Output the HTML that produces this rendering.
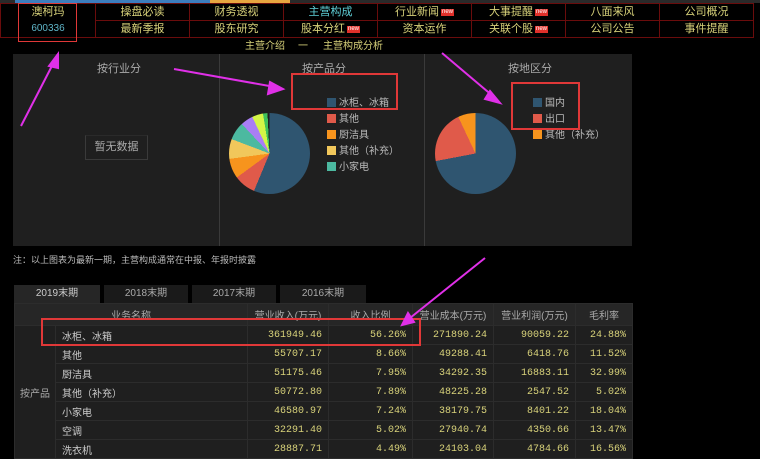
<!DOCTYPE html>
<html><head><meta charset="utf-8"><style>
*{margin:0;padding:0;box-sizing:border-box}
body{width:760px;height:448px;background:#000;position:relative;overflow:hidden;font-family:"Liberation Sans","Noto Sans CJK SC",sans-serif;font-size:11px;color:#ccc}
.a{position:absolute}
.nav{table-layout:fixed}
.nav td{border:1px solid #6a0c0c;color:#d8d27a;text-align:center;height:16px;font-size:11px;line-height:14px;padding:0;white-space:nowrap;overflow:hidden}
.new{display:inline-block;background:#e0302a;color:#fff;font-size:6px;line-height:7px;padding:0 1px;vertical-align:middle;margin-left:2px}
.panel{left:13px;top:54px;width:619px;height:192px;background:#1f1f1f}
.tt{color:#aaa;font-size:11px}
.lg{font-size:10px;color:#bbb;line-height:16px}
.lg i{display:inline-block;width:9px;height:9px;vertical-align:-1px;margin-right:3px}
.tab{top:285px;height:18px;background:#1a1a1a;color:#aaa;text-align:center;line-height:18px;font-size:10px}
table.t{border-collapse:collapse;position:absolute;left:14px;top:303px;width:618px;background:#1f1f1f;table-layout:fixed}
table.t td{border:1px solid #2c2c2c;height:19px;font-size:10px;padding:0 6px;white-space:nowrap;overflow:hidden}
table.t tr.h td{background:#262626;color:#aaa;text-align:center;height:22px;font-size:10px;padding:0}
table.t td.n{color:#d8d27a;text-align:right;font-family:"Liberation Mono","Noto Sans CJK SC",monospace;font-size:10px}
table.t td.c{color:#ccc}
</style></head><body>
<div class="a" style="left:0;top:0;width:760px;height:3px;background:#2a2a2a"></div>
<div class="a" style="left:15px;top:0;width:195px;height:3px;background:#3c7dbd"></div>
<div class="a" style="left:210px;top:0;width:80px;height:3px;background:#e8a640"></div>
<table class="nav a" style="left:0;top:3px;border-collapse:collapse;width:753px">
<colgroup><col style="width:95px"><col style="width:94px"><col style="width:94px"><col style="width:94px"><col style="width:94px"><col style="width:94px"><col style="width:94px"><col style="width:94px"></colgroup>
<tr><td rowspan="2" style="line-height:16px"><span style="color:#d8d27a">澳柯玛</span><br><span style="color:#5fb5c8;font-size:10px">600336</span></td>
<td>操盘必读</td><td>财务透视</td><td style="color:#5fd0d8">主营构成</td><td>行业新闻<span class="new">new</span></td><td>大事提醒<span class="new">new</span></td><td>八面来风</td><td>公司概况</td></tr>
<tr><td>最新季报</td><td>股东研究</td><td>股本分红<span class="new">new</span></td><td>资本运作</td><td>关联个股<span class="new">new</span></td><td>公司公告</td><td>事件提醒</td></tr>
</table>
<div class="a" style="left:18px;top:3px;width:59px;height:39px;border:1.5px solid #e03838"></div>
<div class="a" style="left:245px;top:37px;color:#d8d27a;font-size:10px">主营介绍</div>
<div class="a" style="left:298px;top:37px;color:#d8d27a;font-size:10px">一</div>
<div class="a" style="left:323px;top:37px;color:#d8d27a;font-size:10px">主营构成分析</div>

<div class="a panel"></div>
<div class="a" style="left:219px;top:54px;width:1px;height:192px;background:#3a3a3a"></div>
<div class="a" style="left:424px;top:54px;width:1px;height:192px;background:#3a3a3a"></div>
<div class="a tt" style="left:97px;top:60px">按行业分</div>
<div class="a tt" style="left:302px;top:60px">按产品分</div>
<div class="a tt" style="left:508px;top:60px">按地区分</div>
<div class="a" style="left:85px;top:135px;width:63px;height:25px;border:1px solid #3a3a3a;border-top-color:#2a2a2a;color:#aaa;text-align:center;line-height:23px;font-size:11px">暂无数据</div>
<div class="a" style="left:229px;top:113px;width:81px;height:81px;border-radius:50%;background:conic-gradient(#2f5570 0 56.26%,#e05a4a 0 64.92%,#f7941d 0 72.87%,#f1c75b 0 80.76%,#4cb9a0 0 88%,#a97ef5 0 93%,#d4f546 0 97.4%,#3fc25a 0 99.2%,#1f1f1f 0)"></div>
<div class="a lg" style="left:327px;top:96px"><i style="background:#2f5570"></i>冰柜、冰箱<br><i style="background:#e05a4a"></i>其他<br><i style="background:#f7941d"></i>厨洁具<br><i style="background:#f1c75b"></i>其他（补充）<br><i style="background:#4cb9a0"></i>小家电</div>
<div class="a" style="left:435px;top:113px;width:81px;height:81px;border-radius:50%;background:conic-gradient(#2f5570 0 72%,#e05a4a 0 93%,#f7941d 0)"></div>
<div class="a lg" style="left:533px;top:96px"><i style="background:#2f5570"></i>国内<br><i style="background:#e05a4a"></i>出口<br><i style="background:#f7941d"></i>其他（补充）</div>
<div class="a" style="left:291px;top:73px;width:107px;height:37px;border:2px solid #e03838"></div>
<div class="a" style="left:511px;top:82px;width:69px;height:48px;border:2px solid #e03838"></div>
<div class="a" style="left:13px;top:253px;font-size:9px;color:#bbb">注：以上图表为最新一期，主营构成通常在中报、年报时披露</div>

<div class="a tab" style="left:14px;width:86px;background:#262626;color:#ccc">2019末期</div>
<div class="a tab" style="left:104px;width:84px">2018末期</div>
<div class="a tab" style="left:192px;width:84px">2017末期</div>
<div class="a tab" style="left:280px;width:86px">2016末期</div>
<table class="t">
<colgroup><col style="width:41px"><col style="width:192px"><col style="width:81px"><col style="width:84px"><col style="width:81px"><col style="width:82px"><col style="width:57px"></colgroup>
<tr class="h"><td colspan="2">业务名称</td><td>营业收入(万元)</td><td>收入比例</td><td>营业成本(万元)</td><td>营业利润(万元)</td><td>毛利率</td></tr>
<tr><td rowspan="7" style="color:#aaa;text-align:center;padding:0">按产品</td><td class="c">冰柜、冰箱</td><td class="n">361949.46</td><td class="n">56.26%</td><td class="n">271890.24</td><td class="n">90059.22</td><td class="n">24.88%</td></tr>
<tr><td class="c">其他</td><td class="n">55707.17</td><td class="n">8.66%</td><td class="n">49288.41</td><td class="n">6418.76</td><td class="n">11.52%</td></tr>
<tr><td class="c">厨洁具</td><td class="n">51175.46</td><td class="n">7.95%</td><td class="n">34292.35</td><td class="n">16883.11</td><td class="n">32.99%</td></tr>
<tr><td class="c">其他（补充）</td><td class="n">50772.80</td><td class="n">7.89%</td><td class="n">48225.28</td><td class="n">2547.52</td><td class="n">5.02%</td></tr>
<tr><td class="c">小家电</td><td class="n">46580.97</td><td class="n">7.24%</td><td class="n">38179.75</td><td class="n">8401.22</td><td class="n">18.04%</td></tr>
<tr><td class="c">空调</td><td class="n">32291.40</td><td class="n">5.02%</td><td class="n">27940.74</td><td class="n">4350.66</td><td class="n">13.47%</td></tr>
<tr><td class="c">洗衣机</td><td class="n">28887.71</td><td class="n">4.49%</td><td class="n">24103.04</td><td class="n">4784.66</td><td class="n">16.56%</td></tr>
</table>
<div class="a" style="left:41px;top:318px;width:380px;height:28px;border:2px solid #e03838"></div>

<svg class="a" style="left:0;top:0" width="760" height="448">
<g stroke="#e030e8" stroke-width="2" fill="#e030e8">
<line x1="21" y1="126" x2="55" y2="60"/><polygon points="58,54 49,66 58,68"/>
<line x1="174" y1="69" x2="275" y2="87"/><polygon points="283,89 270,82 268,94"/>
<line x1="442" y1="53" x2="494" y2="97"/><polygon points="500,103 490,91 485,99"/>
<line x1="485" y1="258" x2="410" y2="318"/><polygon points="402,325 414,322 408,313"/>
</g></svg>
</body></html>
